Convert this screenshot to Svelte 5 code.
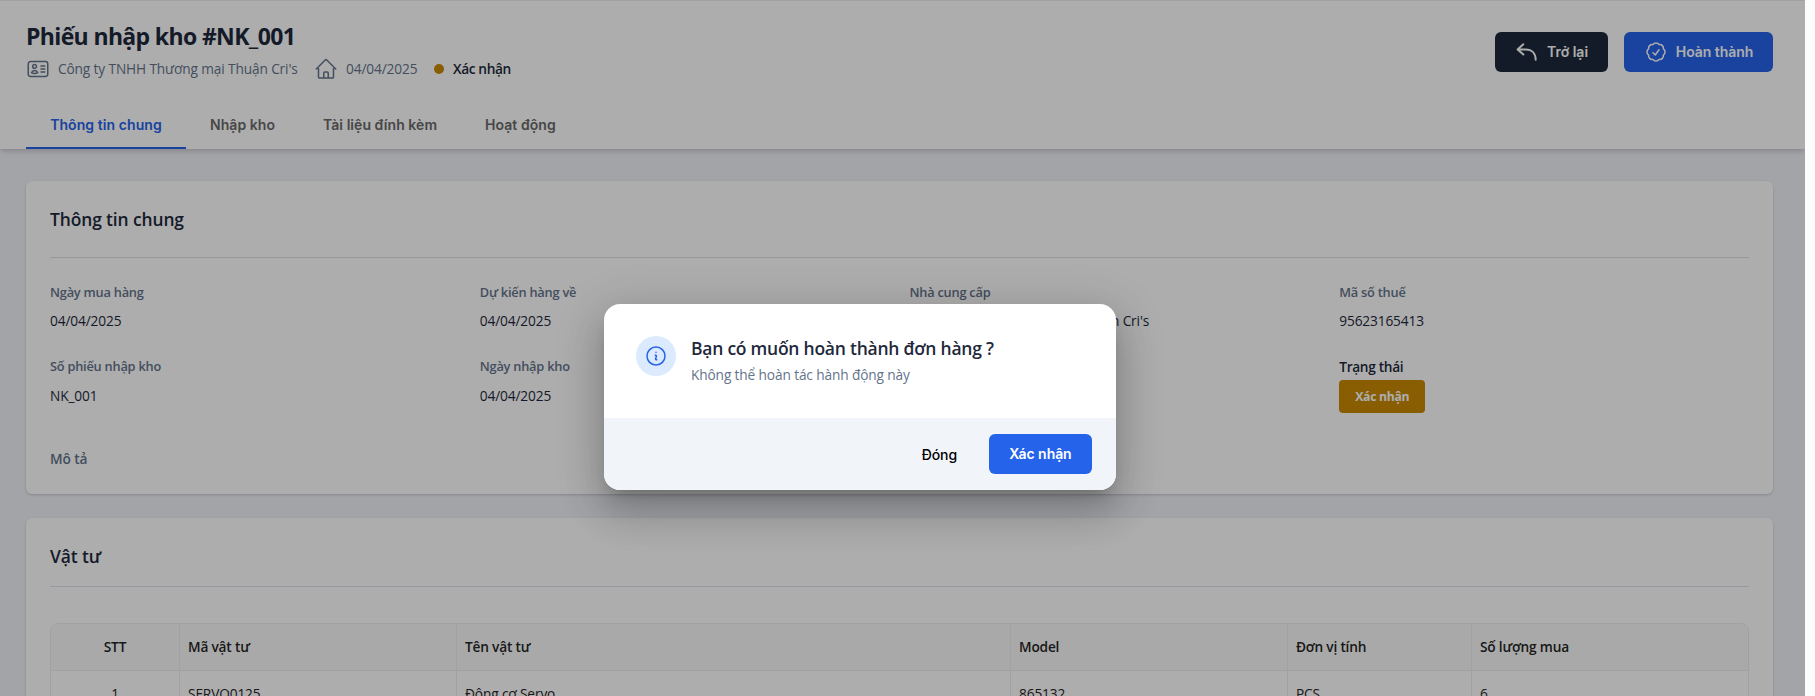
<script>
  const tabs = ['Thông tin chung', 'Nhập kho', 'Tài liệu đính kèm', 'Hoạt động'];
  const supplier = "Công ty TNHH Thương mại Thuận Cri's";
  const fields = [
    ['Ngày mua hàng', '04/04/2025'],
    ['Dự kiến hàng về', '04/04/2025'],
    ['Nhà cung cấp', supplier],
    ['Mã số thuế', '95623165413'],
    ['Số phiếu nhập kho', 'NK_001'],
    ['Ngày nhập kho', '04/04/2025']
  ];
  const columns = ['STT', 'Mã vật tư', 'Tên vật tư', 'Model', 'Đơn vị tính', 'Số lượng mua'];
  const rows = [['1', 'SERVO0125', 'Động cơ Servo', '865132', 'PCS', '6']];
  let active = $state(0);
</script>

<div class="page">
  <header>
    <div class="top">
      <div>
        <h1>Phiếu nhập kho #NK_001</h1>
        <div class="meta">
          <svg viewBox="0 0 24 24"><path d="M15 9h3.75M15 12h3.75M15 15h3.75M4.5 19.5h15a2.25 2.25 0 0 0 2.25-2.25V6.75A2.25 2.25 0 0 0 19.5 4.5h-15a2.25 2.25 0 0 0-2.25 2.25v10.5A2.25 2.25 0 0 0 4.5 19.5Zm6-10.125a1.875 1.875 0 1 1-3.75 0 1.875 1.875 0 0 1 3.75 0Zm1.294 6.336a6.721 6.721 0 0 1-3.17.789 6.721 6.721 0 0 1-3.168-.789 3.376 3.376 0 0 1 6.338 0Z" /></svg>
          <span class="company">{supplier}</span>
          <svg viewBox="0 0 24 24"><path d="m2.25 12 8.954-8.955c.44-.439 1.152-.439 1.591 0L21.75 12M4.5 9.75v10.125c0 .621.504 1.125 1.125 1.125H9.75v-4.875c0-.621.504-1.125 1.125-1.125h2.25c.621 0 1.125.504 1.125 1.125V21h4.125c.621 0 1.125-.504 1.125-1.125V9.75M8.25 21h8.25" /></svg>
          <span class="date">04/04/2025</span>
          <i class="dot"></i>
          <strong>Xác nhận</strong>
        </div>
      </div>
      <div class="actions">
        <button class="btn dark">
          <svg viewBox="0 0 24 24" class="thick"><path d="M8.3 4.3 2.6 9.4l5.8 5.1M2.8 9.4h8c5.8 0 9.9 3.7 9.9 10.4" /></svg>
          Trở lại
        </button>
        <button class="btn blue">
          <svg viewBox="0 0 24 24"><path d="M9 12.75 11.25 15 15 9.75M21 12c0 1.268-.63 2.39-1.593 3.068a3.745 3.745 0 0 1-1.043 3.296 3.745 3.745 0 0 1-3.296 1.043A3.745 3.745 0 0 1 12 21c-1.268 0-2.39-.63-3.068-1.593a3.746 3.746 0 0 1-3.296-1.043 3.745 3.745 0 0 1-1.043-3.296A3.745 3.745 0 0 1 3 12c0-1.268.63-2.39 1.593-3.068a3.745 3.745 0 0 1 1.043-3.296 3.746 3.746 0 0 1 3.296-1.043A3.746 3.746 0 0 1 12 3c1.268 0 2.39.63 3.068 1.593a3.746 3.746 0 0 1 3.296 1.043 3.746 3.746 0 0 1 1.043 3.296A3.745 3.745 0 0 1 21 12Z" /></svg>
          Hoàn thành
        </button>
      </div>
    </div>
    <nav>
      {#each tabs as tab, i}
        <button class="tab" class:active={active === i} onclick={() => (active = i)}>{tab}</button>
      {/each}
    </nav>
  </header>

  <main>
    <section class="card info">
      <h2>Thông tin chung</h2>
      <hr />
      <div class="grid">
        {#each fields as [label, value]}
          <div class="field"><span class="label">{label}</span><p>{value}</p></div>
        {/each}
        <div class="field status"><strong>Trạng thái</strong><span class="badge">Xác nhận</span></div>
      </div>
      <div class="desc">Mô tả</div>
    </section>

    <section class="card items">
      <h2>Vật tư</h2>
      <hr />
      <div class="table">
        <div class="row head">
          {#each columns as c}<div>{c}</div>{/each}
        </div>
        {#each rows as r}
          <div class="row">
            {#each r as c}<div>{c}</div>{/each}
          </div>
        {/each}
      </div>
    </section>
  </main>

  <div class="backdrop"></div>
  <div class="dialog" role="dialog">
    <div class="body">
      <div class="circle">
        <svg viewBox="0 0 24 24"><path d="m11.25 11.25.041-.02a.75.75 0 0 1 1.063.852l-.708 2.836a.75.75 0 0 0 1.063.853l.041-.021M21 12a9 9 0 1 1-18 0 9 9 0 0 1 18 0Zm-9-3.75h.008v.008H12V8.25Z" /></svg>
      </div>
      <div>
        <h3>Bạn có muốn hoàn thành đơn hàng ?</h3>
        <p>Không thể hoàn tác hành động này</p>
      </div>
    </div>
    <div class="foot">
      <button class="close">Đóng</button>
      <button class="btn blue ok">Xác nhận</button>
    </div>
  </div>
</div>

<style>
  :global(body) { background: #fcfcfc; }
  * { box-sizing: border-box; }
  h1, h2, h3, p, hr { margin: 0; }
  .page {
    position: relative;
    width: 1805px;
    height: 696px;
    overflow: hidden;
    background: #f0f2f8;
    color: #1e293b;
    font: 400 13.7px/20px 'Open Sans', 'Noto Sans', sans-serif;
    letter-spacing: -0.13px;
  }
  svg { width: 24px; height: 24px; flex: none; fill: none; stroke: currentColor; stroke-width: 1.5; stroke-linecap: round; stroke-linejoin: round; }
  header {
    position: relative;
    height: 149px;
    padding: 0 32px 0 26px;
    border-top: 1px solid #eceef1;
    background: #fff;
    box-shadow: 0 4px 6px -1px rgba(0, 0, 0, 0.1), 0 2px 4px -1px rgba(0, 0, 0, 0.1);
  }
  .top { display: flex; justify-content: space-between; height: 100px; padding-top: 19px; }
  h1 { font-size: 23px; line-height: 32px; font-weight: 700; letter-spacing: -0.64px; }
  .meta { display: flex; align-items: center; height: 24px; margin-top: 5px; color: #64748b; }
  .company { width: 264px; padding-left: 8px; }
  .date { padding-left: 8px; width: 88px; }
  .dot { width: 10px; height: 10px; margin: 0 9px 0 8px; border-radius: 50%; background: #ca8a04; }
  .meta strong { color: #1e293b; font-weight: 600; letter-spacing: -0.36px; }
  .actions { display: flex; gap: 16px; padding-top: 12px; }
  button { border: 0; background: none; font: 600 14px/20px Inter, sans-serif; cursor: pointer; letter-spacing: 0; }
  .btn { display: flex; align-items: center; justify-content: center; gap: 8px; height: 40px; padding: 0; border-radius: 6px; color: #fff; white-space: nowrap; }
  .dark { width: 113px; background: #1e293b; }
  .blue { width: 149px; background: #2563eb; letter-spacing: -0.06px; }
  .thick { stroke-width: 2; }
  nav { display: flex; height: 48px; }
  .tab { height: 48px; padding: 2px 24px 0; color: #696969; border-bottom: 2px solid transparent; letter-spacing: 0.05px; }
  .tab.active { width: 160px; padding: 2px 0 0; color: #2563eb; border-color: #2563eb; letter-spacing: 0.08px; }

  main { display: flex; flex-direction: column; gap: 24px; padding: 32px 32px 0 26px; }
  .card { padding: 0 24px; border-radius: 6px; background: #fff; box-shadow: 0 1px 3px rgba(0, 0, 0, 0.1), 0 1px 2px rgba(0, 0, 0, 0.08); }
  h2 { font-size: 17.4px; line-height: 28px; font-weight: 600; letter-spacing: -0.1px; }
  hr { border: 0; border-top: 1px solid #dfe2e6; }
  .info { height: 313px; padding-top: 24px; }
  .info hr { margin-top: 24px; }
  .grid { display: grid; grid-template-columns: repeat(4, 1fr); column-gap: 20px; grid-auto-rows: 74px; margin-top: 24px; }
  .field { display: flex; flex-direction: column; }
  .label { color: #64748b; font-size: 12.8px; font-weight: 600; line-height: 20px; letter-spacing: -0.23px; }
  .field p { margin-top: 9px; }
  .field:nth-child(n + 5) p { margin-top: 10px; }
  .status { grid-column: 4; padding-top: 1px; }
  .status strong { font-weight: 600; letter-spacing: -0.33px; }
  .badge { width: 86px; height: 33px; margin-top: 3px; border-radius: 4px; background: #ca8a04; color: #fff; text-align: center; font-size: 12.2px; font-weight: 700; line-height: 33px; letter-spacing: -0.3px; }
  .desc { margin-top: 19px; color: #64748b; font-weight: 600; letter-spacing: -0.1px; }
  .items { height: 300px; padding-top: 24px; }
  .items hr { margin-top: 16px; border-color: #dde2ee; }
  .table { margin-top: 36px; border: 1px solid #ededed; border-radius: 8px 8px 0 0; overflow: hidden; color: #262626; }
  .row { display: grid; grid-template-columns: 129px 277px 554px 277px 184px 1fr; height: 48px; border-bottom: 1px solid #ededed; line-height: 45px; }
  .row div { padding-left: 8px; border-right: 1px solid #ededed; }
  .row div:first-child { padding: 0; text-align: center; }
  .row div:last-child { border-right: 0; }
  .head { height: 47px; background: #fafafa; font-weight: 600; line-height: 46px; letter-spacing: -0.2px; }

  .backdrop { position: absolute; inset: 0; background: rgba(0, 0, 0, 0.32); }
  .dialog {
    position: absolute;
    left: 604px;
    top: 304px;
    width: 512px;
    height: 186px;
    border-radius: 16px;
    background: #fff;
    box-shadow: 0 11px 15px -7px rgba(0, 0, 0, 0.2), 0 24px 38px 3px rgba(0, 0, 0, 0.14), 0 9px 46px 8px rgba(0, 0, 0, 0.12);
  }
  .body { display: flex; gap: 15px; height: 114px; padding: 32px; }
  .circle { display: flex; align-items: center; justify-content: center; width: 40px; height: 40px; border-radius: 50%; background: #dbeafe; color: #2563eb; }
  h3 { font-size: 17.5px; line-height: 24px; font-weight: 600; letter-spacing: -0.24px; }
  .body p { margin-top: 5px; color: #64748b; }
  .foot { display: flex; align-items: center; justify-content: flex-end; height: 72px; padding-right: 24px; border-radius: 0 0 16px 16px; background: #f1f5f9; }
  .close { height: 40px; padding: 1px 32px 0 0; color: #000; font-weight: 500; letter-spacing: -0.1px; }
  .ok { width: 103px; padding-bottom: 1px; }
</style>
